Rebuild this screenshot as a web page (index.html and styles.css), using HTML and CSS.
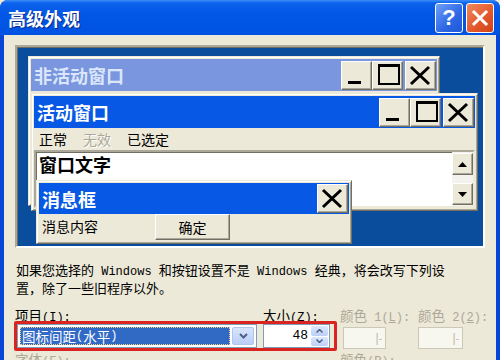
FILE: index.html
```html
<!DOCTYPE html>
<html lang="zh-CN">
<head>
    <meta charset="UTF-8">
    <title>高级外观</title>
    <link rel="stylesheet" href="styles.css">
</head>
<body>
    <div class="dialog">
        <div class="titlebar">
            <span class="title">高级外观</span>
            <div class="caption">
                <span class="cap help">?</span>
                <span class="cap close">
                    <svg width="18" height="18" viewBox="0 0 18 18"><path d="M3 3L15 15M15 3L3 15" stroke="#fff" stroke-width="3" stroke-linecap="square"/></svg>
                </span>
            </div>
        </div>

        <div class="client">
            <!-- 预览区 -->
            <div class="preview">
                <div class="win inactive">
                    <div class="bar">
                        <span class="bar-text">非活动窗口</span>
                        <div class="bar-btns">
                            <span class="wbtn"><svg width="29" height="27"><rect x="6" y="19" width="13" height="3"/></svg></span>
                            <span class="wbtn"><svg width="29" height="27"><rect x="6" y="3" width="20" height="19" fill="none" stroke="#000" stroke-width="2"/><rect x="5" y="2" width="22" height="3"/></svg></span>
                            <span class="wbtn gap"><svg width="29" height="27"><path d="M5 5L23 22M23 5L5 22" stroke="#000" stroke-width="3"/></svg></span>
                        </div>
                    </div>
                </div>

                <div class="win active">
                    <div class="bar">
                        <span class="bar-text">活动窗口</span>
                        <div class="bar-btns">
                            <span class="wbtn"><svg width="29" height="27"><rect x="6" y="19" width="13" height="3"/></svg></span>
                            <span class="wbtn"><svg width="29" height="27"><rect x="6" y="3" width="20" height="19" fill="none" stroke="#000" stroke-width="2"/><rect x="5" y="2" width="22" height="3"/></svg></span>
                            <span class="wbtn gap"><svg width="29" height="27"><path d="M5 5L23 22M23 5L5 22" stroke="#000" stroke-width="3"/></svg></span>
                        </div>
                    </div>
                    <div class="menu">
                        <span>正常</span>
                        <span class="dis">无效</span>
                        <span>已选定</span>
                    </div>
                    <div class="textbox">
                        <span class="wintext">窗口文字</span>
                        <div class="scroll">
                            <span class="sbtn"><svg width="9" height="5"><path d="M4.5 0L9 5H0Z"/></svg></span>
                            <span class="sbtn"><svg width="9" height="5"><path d="M0 0H9L4.5 5Z"/></svg></span>
                        </div>
                    </div>
                </div>

                <div class="win msgbox">
                    <div class="bar">
                        <span class="bar-text">消息框</span>
                        <div class="bar-btns">
                            <span class="wbtn"><svg width="29" height="27"><path d="M5 5L23 22M23 5L5 22" stroke="#000" stroke-width="3"/></svg></span>
                        </div>
                    </div>
                    <div class="msg-body">
                        <span>消息内容</span>
                        <span class="okbtn">确定</span>
                    </div>
                </div>
            </div>

            <p class="note">如果您选择的<span class="en"> Windows </span>和按钮设置不是<span class="en"> Windows </span>经典，将会改写下列设<br>置，除了一些旧程序以外。</p>

            <div class="fields">
                <label class="lbl">项目<span class="en">(<u>I</u>):</span></label>
                <label class="lbl">大小<span class="en">(<u>Z</u>):</span></label>
                <label class="lbl off">颜色<span class="en"> 1(<u>L</u>):</span></label>
                <label class="lbl off">颜色<span class="en"> 2(<u>2</u>):</span></label>

                <div class="combo">
                    <span class="combo-sel">图标间距<span class="en">(</span>水平<span class="en">)</span></span>
                    <span class="drop"><svg width="9" height="6"><path d="M1 1L4.5 4.5L8 1" fill="none" stroke="#4D6185" stroke-width="2"/></svg></span>
                </div>
                <div class="spin">
                    <span class="spin-val en">48</span>
                    <span class="spin-btns">
                        <span class="sp"><svg width="7" height="4"><path d="M0.5 3.5L3.5 0.5L6.5 3.5" fill="none" stroke="#4D6185" stroke-width="1.5"/></svg></span>
                        <span class="sp"><svg width="7" height="4"><path d="M0.5 0.5L3.5 3.5L6.5 0.5" fill="none" stroke="#4D6185" stroke-width="1.5"/></svg></span>
                    </span>
                </div>
                <div class="color-dd"><span class="dd-arrow">|<span class="dash">-</span></span></div>
                <div class="color-dd"><span class="dd-arrow">|<span class="dash">-</span></span></div>

                <label class="lbl off">字体<span class="en">(<u>F</u>):</span></label>
                <span></span>
                <label class="lbl off">颜色<span class="en">(<u>R</u>):</span></label>
                <span></span>

                <div class="mark"></div>
            </div>
        </div>
    </div>
</body>
</html>
```

FILE: styles.css
```css
body {
    margin: 0;
    width: 500px;
    height: 360px;
    overflow: hidden;
    background-color: #ECE9D8;
    font-family: "Noto Sans Mono CJK SC", "Noto Sans CJK SC", sans-serif;
}
.dialog {
    width: 500px;
    height: 360px;
    display: flex;
    flex-direction: column;
    background-color: #0846D8;
    border-radius: 8px 8px 0 0;
    overflow: hidden;
}
.titlebar {
    height: 35px;
    flex-shrink: 0;
    display: flex;
    align-items: center;
    padding: 0 6px 0 8px;
    background: linear-gradient(#3C8EF7 0, #0C62EC 3px, #0257E6 40%, #0053E2 100%);
}
.title {
    flex: 1;
    color: white;
    font: bold 18px/1 "Noto Sans CJK SC", sans-serif;
    text-shadow: 1px 1px #0A2A8A;
}
.caption {
    display: flex;
    gap: 3px;
}
.cap {
    width: 28px;
    height: 30px;
    box-sizing: border-box;
    border: 1px solid white;
    border-radius: 3px;
    display: flex;
    align-items: center;
    justify-content: center;
}
.help {
    background: linear-gradient(135deg, #6FA0F8, #2D67E4 60%, #2058D8);
    color: white;
    font: bold 22px/1 "Liberation Sans", sans-serif;
}
.close {
    background: linear-gradient(135deg, #F08A5E, #E2562A 60%, #CF4218);
}

.client {
    flex: 1;
    margin: 0 4px;
    padding: 10px 0 0 11px;
    background-color: #ECE9D8;
}

/* 预览 */
.preview {
    position: relative;
    width: 470px;
    height: 203px;
    box-sizing: border-box;
    border: 2px solid;
    border-color: #ACA899 white white #ACA899;
    box-shadow: inset 1px 1px #716F64;
    background-color: #0A4D9C;
}
.win {
    position: absolute;
    box-sizing: border-box;
    padding: 2px;
    background-color: #ECE9D8;
    border: 1px solid;
    border-color: #ECE9D8 #716F64 #716F64 #ECE9D8;
    box-shadow: inset 1px 1px white, inset -1px -1px #ACA899;
}
.inactive {
    left: 11px;
    top: 9px;
    width: 412px;
    height: 150px;
}
.active {
    left: 14px;
    top: 46px;
    width: 447px;
    height: 118px;
}
.msgbox {
    left: 19px;
    top: 133px;
    width: 316px;
    height: 64px;
}
.bar {
    height: 32px;
    display: flex;
    align-items: center;
    padding: 0 1px 0 3px;
    background-color: #0758E4;
    color: white;
}
.inactive .bar {
    background-color: #7A96DF;
    color: #DCE6FA;
}
.msgbox .bar {
    height: 31px;
}
.bar-text {
    flex: 1;
    font: bold 18px/1 "Noto Sans CJK SC", sans-serif;
}
.bar-btns {
    display: flex;
}
.wbtn {
    width: 31px;
    height: 29px;
    box-sizing: border-box;
    display: flex;
    background-color: #ECE9D8;
    border: 1px solid;
    border-color: white #716F64 #716F64 white;
    box-shadow: inset -1px -1px #ACA899;
}
.wbtn.gap {
    margin-left: 2px;
}
.menu {
    height: 22px;
    display: flex;
    align-items: center;
    gap: 16px;
    padding-left: 5px;
    font-size: 14px;
    line-height: 1;
}
.dis {
    color: #ACA899;
    text-shadow: 1px 1px white;
}
.textbox {
    height: 58px;
    box-sizing: border-box;
    display: flex;
    background-color: white;
    border: 2px solid;
    border-color: #ACA899 #ECE9D8 #ECE9D8 #ACA899;
    box-shadow: inset 1px 1px #716F64;
}
.wintext {
    flex: 1;
    padding: 3px 0 0 3px;
    font: bold 18px/1.1 "Noto Sans CJK SC", sans-serif;
}
.scroll {
    width: 21px;
    display: flex;
    flex-direction: column;
    justify-content: space-between;
    padding: 1px 0;
    background-color: #F3F2EC;
}
.sbtn {
    height: 22px;
    box-sizing: border-box;
    display: flex;
    align-items: center;
    justify-content: center;
    background-color: #ECE9D8;
    border: 1px solid;
    border-color: white #716F64 #716F64 white;
    box-shadow: inset -1px -1px #ACA899;
}
.msg-body {
    display: flex;
    align-items: flex-start;
    gap: 57px;
    padding-left: 3px;
    font-size: 14px;
    line-height: 1;
}
.msg-body > span:first-child {
    margin-top: 5px;
}
.okbtn {
    width: 75px;
    height: 26px;
    box-sizing: border-box;
    display: flex;
    align-items: center;
    justify-content: center;
    background-color: #ECE9D8;
    border: 1px solid;
    border-color: white #716F64 #716F64 white;
    box-shadow: inset -1px -1px #ACA899;
}

/* 下方说明和选项 */
.en {
    font-family: "Liberation Mono", monospace;
    font-size: 12px;
}
.note {
    margin: 14px 0 0 1px;
    font-size: 13px;
    line-height: 15px;
    color: #000;
    white-space: nowrap;
}
.fields {
    position: relative;
    display: grid;
    grid-template-columns: 248px 77px 78px 78px;
    grid-template-rows: 14px 26px 14px;
    row-gap: 2px;
    margin-top: 13px;
}
.lbl {
    font-size: 13.5px;
    line-height: 14px;
    white-space: nowrap;
}
.lbl.off {
    color: #ACA899;
}
.combo {
    margin-left: 2px;
    width: 240px;
    height: 24px;
    box-sizing: border-box;
    display: flex;
    gap: 2px;
    padding: 2px;
    background-color: white;
    border: 1px solid #7F9DB9;
}
.combo-sel {
    flex: 1;
    display: flex;
    align-items: center;
    padding-left: 2px;
    background-color: #316AC5;
    color: white;
    font-size: 13.5px;
    outline: 1px dotted #F0D080;
    outline-offset: -1px;
}
.drop {
    width: 20px;
    display: flex;
    align-items: center;
    justify-content: center;
    background: linear-gradient(#D9E5FD, #B9CDF8);
    border: 1px solid #B0C4F2;
    border-radius: 2px;
}
.spin {
    width: 67px;
    height: 24px;
    box-sizing: border-box;
    display: flex;
    padding: 1px;
    background-color: white;
    border: 1px solid #7F9DB9;
}
.spin-val {
    flex: 1;
    text-align: right;
    padding-right: 3px;
    font-size: 13px;
    line-height: 20px;
}
.spin-btns {
    width: 17px;
    display: flex;
    flex-direction: column;
    gap: 1px;
}
.sp {
    flex: 1;
    display: flex;
    align-items: center;
    justify-content: center;
    background: linear-gradient(#DCE7FD, #BCCFF8);
    border-radius: 2px;
}
.color-dd {
    margin: 3px 0 0 3px;
    width: 43px;
    height: 22px;
    box-sizing: border-box;
    display: flex;
    justify-content: flex-end;
    align-items: center;
    padding-right: 3px;
    background-color: #F7F6EF;
    border: 1px solid #CBC8B8;
}
.color-dd + .color-dd {
    margin-left: 0;
    width: 45px;
}
.dd-arrow {
    color: #BDBAAA;
    font: 12px/1 "Liberation Sans", sans-serif;
}
.dash {
    font-size: 10px;
}
.mark {
    position: absolute;
    left: -1px;
    top: 13px;
    width: 323px;
    height: 30px;
    box-sizing: border-box;
    border: 3px solid #DA2420;
    border-radius: 2px;
}
```
